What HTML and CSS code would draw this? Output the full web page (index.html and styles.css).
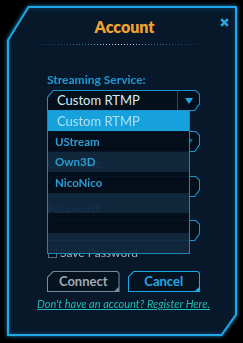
FILE: index.html
```html
<!DOCTYPE html>
<html>
<head>
<meta charset="utf-8">
<link rel="stylesheet" href="styles.css">
</head>
<body>
<div class="screen">
  <div class="glow">
    <div class="frame">
      <div class="panel">
        <header class="head">
          <h1 class="title">Account</h1>
          <button class="close" type="button" aria-label="Close">
            <svg width="9" height="9" viewBox="0 0 9 9"><path d="M1.2 1.2 L7.8 7.8 M7.8 1.2 L1.2 7.8" stroke="#27a9e8" stroke-width="2.4" fill="none"/></svg>
          </button>
        </header>
        <div class="dots"></div>
        <form class="form">
          <div class="lbl lbl-first">Streaming Service:</div>
          <div class="select-wrap">
            <div class="field">
              <div class="fi sel">
                <span class="val">Custom RTMP</span>
                <span class="arrow"><span class="tri"></span></span>
              </div>
            </div>
            <ul class="menu">
              <li class="item active">Custom RTMP</li>
              <li class="item dark">UStream</li>
              <li class="item light">Own3D</li>
              <li class="item dark">NicoNico</li>
              <li class="item light"></li>
              <li class="item dark"></li>
              <li class="item light"></li>
            </ul>
          </div>
          <div class="lbl lbl-2">Server:</div>
          <div class="field f2">
            <div class="fi sel">
              <span class="val"></span>
              <span class="arrow"><span class="tri dim"></span></span>
            </div>
          </div>
          <div class="lbl lbl-3">Username:</div>
          <div class="field f3"><div class="fi"></div></div>
          <div class="lbl lbl-4">Password:</div>
          <div class="field f4"><div class="fi"></div></div>
          <label class="check"><span class="box"></span>Save Password</label>
          <div class="buttons">
            <button type="button" class="btn btn-gray"><span class="btn-in">Connect</span></button>
            <button type="button" class="btn btn-blue"><span class="btn-in">Cancel</span></button>
          </div>
          <a class="link" href="#">Don't have an account? Register Here.</a>
        </form>
      </div>
    </div>
  </div>
</div>
</body>
</html>
```

FILE: styles.css
```css
* { box-sizing: border-box; margin: 0; padding: 0; }
html, body { width: 243px; height: 343px; overflow: hidden; }
body { background: #000; font-family: Lato, "Open Sans", sans-serif; }

.screen { padding: 6px 6px 7px 7px; height: 343px; }
.glow { width: 230px; height: 330px; filter: drop-shadow(0 0 2px rgba(40, 175, 250, 0.75)); }
.frame {
  height: 330px;
  padding: 2px;
  background: #1ea8e8;
  clip-path: polygon(21px 0, 100% 0, 100% calc(100% - 21px), calc(100% - 15px) 100%, 0 100%, 0 34px);
}
.panel {
  height: 100%;
  background: #06182a;
  box-shadow: inset 0 0 5px rgba(30, 150, 220, 0.35);
  clip-path: polygon(20px 0, 100% 0, 100% calc(100% - 19.7px), calc(100% - 14px) 100%, 0 100%, 0 32.6px);
}

.head { display: grid; grid-template-columns: 1fr auto 1fr; padding-top: 9px; }
.title { grid-column: 2; margin-left: 5px; font-size: 16px; line-height: 20px; font-weight: 800; color: #f2a22e; }
.close {
  grid-column: 3; justify-self: end; align-self: start;
  margin: 1px 6px 0 0; width: 9px; height: 9px;
  background: none; border: 0; display: block;
}
.close svg { display: block; }

.dots {
  margin: 7px 0 0 28px; width: 163px; height: 1px;
  background: linear-gradient(90deg, #0c2c44 0%, #3a7ea8 30%, #e8f4ff 50%, #3a7ea8 70%, #0c2c44 100%);
  -webkit-mask-image: repeating-linear-gradient(90deg, #000 0 1px, transparent 1px 3px);
  mask-image: repeating-linear-gradient(90deg, #000 0 1px, transparent 1px 3px);
}

.form { display: flex; flex-direction: column; padding: 0 35px 0 38px; }
.lbl { font-size: 12px; line-height: 15px; font-weight: 700; color: #1c9ad6; }
.lbl-first { margin-top: 27px; margin-bottom: 3px; }
.lbl-2 { margin: 2px 0 3px; }
.lbl-3 { margin: 4px 0 5px; }
.lbl-4 { margin: 4px 0 4px; }

.select-wrap { position: relative; z-index: 5; }
.field {
  height: 21px; padding: 1px;
  background: #1d92cc;
  clip-path: polygon(6px 0, calc(100% - 4px) 0, 100% 4px, 100% calc(100% - 7px), calc(100% - 5px) 100%, 0 100%, 0 7px);
}
.fi {
  height: 100%;
  background: #040f1c;
  clip-path: polygon(5.5px 0, calc(100% - 3.6px) 0, 100% 3.6px, 100% calc(100% - 6.5px), calc(100% - 4.6px) 100%, 0 100%, 0 6.5px);
}
.sel { display: flex; }
.val { flex: 1; padding-left: 9px; font-size: 13px; line-height: 19px; color: #d6ecf4; }
.arrow { width: 22px; border-left: 1px solid #244a62; display: flex; align-items: center; justify-content: center; }
.tri { width: 0; height: 0; border-left: 4.5px solid transparent; border-right: 4.5px solid transparent; border-top: 6px solid #1ea8e8; margin-top: 1px; }
.tri.dim { border-top-color: #1a6c98; }

.menu {
  position: absolute; top: 100%; left: 0; width: 143px; z-index: 5;
  list-style: none;
  border: 1px solid #1a86bc; border-top: 0;
}
.item { height: 20px; padding-left: 7px; font-size: 11.5px; line-height: 20px; font-weight: 700; color: #2a9ed2; }
.item.active { height: 20px; padding-left: 9px; background: #16a0dc; color: #aee0f4; font-size: 13px; font-weight: 400; }
.item.dark { background: rgba(4, 15, 28, 0.94); }
.item.light { background: rgba(17, 40, 60, 0.93); }
.item:nth-child(2), .item:nth-child(4) { height: 21px; line-height: 21px; }

.check { display: flex; align-items: center; gap: 3px; margin-top: 5px; height: 14px; font-size: 12px; line-height: 14px; color: #9fb0bf; padding-left: 1px; }
.box { width: 9px; height: 9px; border: 1px solid #5f6f7c; background: #061422; }

.buttons { display: grid; grid-template-columns: 1fr 1fr; gap: 8px; margin-top: 11px; }
.btn {
  display: block; height: 21px; padding: 1px; border: 0;
  font-family: Lato, "Open Sans", sans-serif;
  clip-path: polygon(6px 0, calc(100% - 2px) 0, 100% 2px, 100% 100%, 0 100%, 0 6px);
}
.btn-in {
  display: block; height: 100%;
  background: #05121f;
  clip-path: polygon(5.5px 0, calc(100% - 1.6px) 0, 100% 1.6px, 100% calc(100% - 4px), calc(100% - 4px) 100%, 0 100%, 0 5.5px);
  font-size: 13px; line-height: 19px; text-align: center;
}
.btn-gray { background: #7c8a95; }
.btn-gray .btn-in { color: #9eabb4; font-weight: 700; }
.btn-blue { background: #1ea8e8; }
.btn-blue .btn-in { color: #22a9ea; font-weight: 700; }

.link {
  margin-top: 5px; align-self: center; white-space: nowrap;
  font-size: 11px; line-height: 13px; font-style: italic;
  color: #20bcb8; text-decoration: underline;
}
```
